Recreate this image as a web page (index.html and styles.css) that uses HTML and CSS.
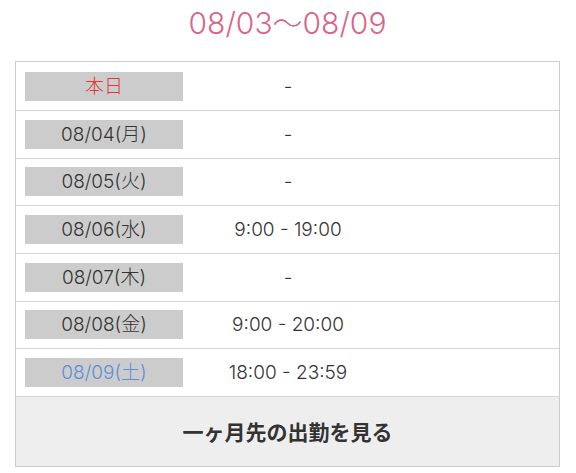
FILE: index.html
```html
<!DOCTYPE html>
<html lang="ja">
<head>
<meta charset="utf-8">
<link rel="stylesheet" href="styles.css">
</head>
<body>
<div class="wrap">
  <h2 class="title">08/03〜08/09</h2>
  <div class="sched">
    <div class="row first"><div class="day today">本日</div><div class="time">-</div></div>
    <div class="row"><div class="day">08/04(月)</div><div class="time">-</div></div>
    <div class="row"><div class="day">08/05(火)</div><div class="time">-</div></div>
    <div class="row"><div class="day">08/06(水)</div><div class="time">9:00 - 19:00</div></div>
    <div class="row"><div class="day">08/07(木)</div><div class="time">-</div></div>
    <div class="row"><div class="day">08/08(金)</div><div class="time">9:00 - 20:00</div></div>
    <div class="row"><div class="day sat">08/09(土)</div><div class="time">18:00 - 23:59</div></div>
    <div class="more">一ヶ月先の出勤を見る</div>
  </div>
</div>
</body>
</html>
```
FILE: styles.css
```css
html, body {
  margin: 0;
  padding: 0;
  background: #fff;
}
body {
  font-family: "Inter", "Noto Sans CJK JP", sans-serif;
  color: #333;
}
.wrap {
  padding: 0 16px 0 15px;
}
.title {
  margin: 0;
  height: 61px;
  box-sizing: border-box;
  padding-top: 4px;
  text-align: center;
  font-size: 30px;
  line-height: 38px;
  font-weight: 300;
  color: #d6678b;
}
.sched {
  border: 1px solid #cccccc;
}
.row {
  display: flex;
  align-items: center;
  height: 46.67px;
  border-bottom: 1px solid #d4d4d4;
  padding-left: 9px;
}
.row.first {
  height: 48px;
}
.day {
  width: 158px;
  height: 29px;
  background: #cccccc;
  text-align: center;
  font-size: 19px;
  font-weight: 300;
  line-height: 29px;
  color: #333;
}
.day.today {
  color: #e5373b;
}
.day.sat {
  color: #5d8fd8;
}
.time {
  width: 210px;
  text-align: center;
  font-size: 19px;
  font-weight: 300;
  line-height: 29px;
  color: #333;
}
.more {
  height: 69px;
  background: #eeeeee;
  text-align: center;
  font-family: "Noto Sans CJK JP", sans-serif;
  font-weight: 700;
  font-size: 21px;
  line-height: 69px;
  color: #333;
}
```
